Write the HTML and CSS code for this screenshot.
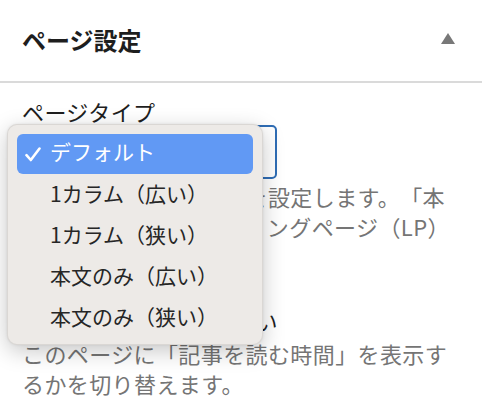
FILE: index.html
```html
<!DOCTYPE html>
<html lang="ja">
<head>
  <meta charset="UTF-8" />
  <meta name="viewport" content="width=device-width,initial-scale=1" />
  <title>ページ設定</title>
  <link rel="stylesheet" href="styles.css">
</head>
<body>

  <div class="panel">
    <!-- Panel header -->
    <div class="panel-header">
      <h2>ページ設定</h2>
      <span class="caret"></span>
    </div>

    <div class="panel-body">
      <!-- Page type -->
      <div class="field">
        <label class="field-label">ページタイプ</label>
        <div class="select-wrap">
          <div class="select">デフォルト</div>
          <ul class="menu">
            <li class="menu-item selected">
              <svg class="check" width="16" height="15" viewBox="0 0 16 15"><path d="M1.5 8.2 L5.8 13 L14.5 1.5" fill="none" stroke="#fff" stroke-width="2.6" stroke-linecap="round" stroke-linejoin="round"/></svg>
              デフォルト
            </li>
            <li class="menu-item">1カラム（広い）</li>
            <li class="menu-item">1カラム（狭い）</li>
            <li class="menu-item">本文のみ（広い）</li>
            <li class="menu-item">本文のみ（狭い）</li>
          </ul>
        </div>
        <p class="help">ページの表示スタイルを設定します。「本文のみ」は主にランディングページ（LP）向けです。</p>
      </div>

      <!-- Reading time -->
      <div class="field">
        <label class="check-row"><span class="box"></span>読む時間を表示しない</label>
        <p class="help tight">このページに「記事を読む時間」を表示するかを切り替えます。</p>
      </div>
    </div>
  </div>

</body>
</html>
```

FILE: styles.css
```css
* { box-sizing: border-box; margin:0; padding:0 }
body {
  font-family: "Noto Sans CJK JP", "Noto Sans", sans-serif;
  background: #fff;
  color: #1e1e1e;
  width: 482px;
  height: 400px;
  overflow: hidden;
}

.panel-header {
  height: 83px;
  padding: 0 27px 0 22px;
  display: flex;
  align-items: center;
  justify-content: space-between;
  border-bottom: 2px solid #dadada;
}

.panel-header h2 {
  font-size: 24px;
  font-weight: 700;
  line-height: 30px;
  margin-top: -2px;
}

.caret {
  width: 0; height: 0;
  border-left: 7px solid transparent;
  border-right: 7px solid transparent;
  border-bottom: 11px solid #787878;
  margin-top: -4px;
}

.panel-body {
  padding: 14px 22px;
  font-size: 22px;
  letter-spacing: 0.4px;
  text-spacing-trim: space-all;
}

.field-label {
  display: block;
  line-height: 28px;
}

.select-wrap { position: relative; }

.select {
  width: 255px;
  height: 54px;
  border: 2px solid #2f6db5;
  border-radius: 5px;
  padding: 0 14px;
  line-height: 50px;
  color: #1e1e1e;
}

.menu {
  position: absolute;
  left: -15px;
  top: -1px;
  width: 256px;
  padding: 9px 9px 5px;
  list-style: none;
  background: #edeae7;
  border: 1px solid rgba(0,0,0,0.08);
  border-radius: 10px;
  box-shadow: 0 6px 22px rgba(0,0,0,0.22), 0 0 3px rgba(0,0,0,0.08);
  font-size: 21px;
  letter-spacing: 0;
}

.menu-item {
  height: 41px;
  line-height: 36px;
  padding-left: 33px;
  color: #262626;
  border-radius: 6px;
  position: relative;
}

.menu-item.selected {
  height: 40px;
  line-height: 35px;
  margin-bottom: 1px;
  background: #6199f4;
  color: #fff;
}

.check {
  position: absolute;
  left: 8px;
  top: 13px;
}

.help {
  margin-top: 2px;
  line-height: 30px;
  color: #757575;
}

.check-row {
  display: flex;
  align-items: center;
  gap: 10px;
  margin-top: 34px;
  line-height: 30px;
}

.box {
  width: 22px;
  height: 22px;
  border: 2px solid #1e1e1e;
  border-radius: 3px;
}

.help.tight { margin-top: 3px; }
```
